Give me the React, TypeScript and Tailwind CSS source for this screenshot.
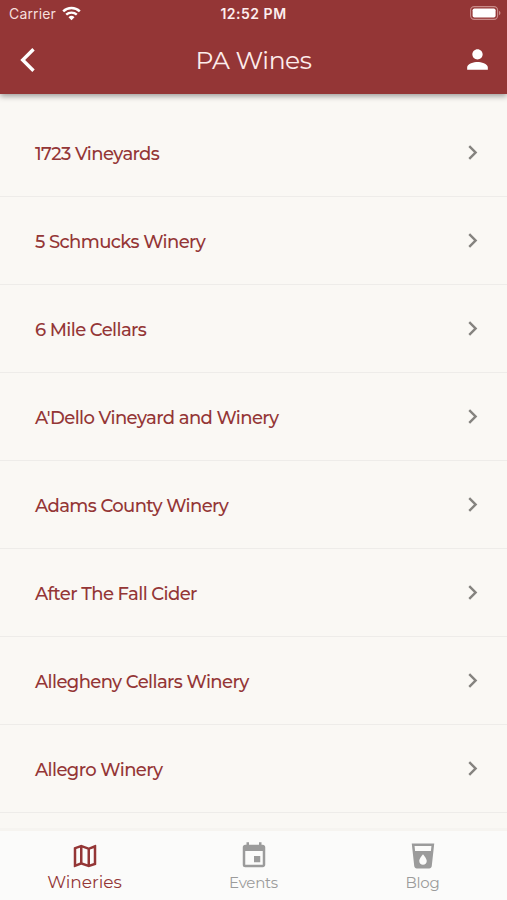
import React from "react";
import {
  MdChevronRight,
  MdEvent,
  MdLocalDrink,
  MdOutlineMap,
  MdPerson,
} from "react-icons/md";

const wineries = [
  "1723 Vineyards",
  "5 Schmucks Winery",
  "6 Mile Cellars",
  "A'Dello Vineyard and Winery",
  "Adams County Winery",
  "After The Fall Cider",
  "Allegheny Cellars Winery",
  "Allegro Winery",
];

const StatusBar = () => (
  <div className="grid h-7 grid-cols-3 items-center px-[8px] font-['Inter',sans-serif]">
    <div className="flex items-center gap-[6px] pl-px">
      <span className="text-[14px] leading-7 tracking-[0.15px] text-[#f6dfdc]">Carrier</span>
      <svg className="mb-[2px] text-white" width="19" height="15" viewBox="0 0 19 15" fill="none">
        <path d="M1.2 5.4a12 12 0 0 1 16.6 0" stroke="currentColor" strokeWidth="2.5" />
        <path d="M4.2 8.7a7.7 7.7 0 0 1 10.6 0" stroke="currentColor" strokeWidth="2.4" />
        <path d="M9.5 14.2 6.5 11.2a4.3 4.3 0 0 1 6 0z" fill="currentColor" />
      </svg>
    </div>
    <p className="pb-px text-center text-[14px] font-semibold tracking-[0.5px] text-[#fdeeee]">
      12:52 PM
    </p>
    <svg className="mb-[2px] mr-[-2px] justify-self-end" width="31" height="14" viewBox="0 0 31 14">
      <rect x="0.6" y="0.6" width="27" height="12.8" rx="3.6" fill="none" stroke="#c98b89" strokeWidth="1.1" />
      <rect x="2.6" y="2.4" width="23" height="9.2" rx="1.8" fill="#fff" />
      <path d="M29 4.8c2 .8 2 3.6 0 4.4z" fill="#c98b89" />
    </svg>
  </div>
);

const Header = () => (
  <header className="relative z-10 h-[94px] bg-[#943636] shadow-[0_2px_6px_rgba(0,0,0,0.4)]">
    <StatusBar />
    <div className="flex h-[63px] items-center justify-between pl-[20px] pr-[14px] text-white">
      <button type="button" aria-label="Back" className="w-[25px]">
        <svg width="16" height="26" viewBox="0 0 16 26" fill="none">
          <path d="M13.5 2.2 2.7 13l10.8 10.8" stroke="currentColor" strokeWidth="3.4" />
        </svg>
      </button>
      <h1 className="whitespace-nowrap pt-[2px] text-[25px] tracking-[-0.45px] text-[#fdeceb]">
        PA Wines
      </h1>
      <button type="button" aria-label="Account" className="w-[31px]">
        <MdPerson size={31} />
      </button>
    </div>
  </header>
);

const App = () => {
  return (
    <div className="flex h-[900px] w-[507px] flex-col overflow-hidden bg-[#faf8f4] font-['Montserrat','Inter',sans-serif]">
      <Header />
      <ul className="min-h-0 flex-1 overflow-hidden pt-[15px]">
        {wineries.map((name) => (
          <li
            key={name}
            className="flex h-[88px] items-center justify-between border-b border-[#eeece9] pl-[35px] pr-[20px]"
          >
            <span className="pt-[4px] text-[18px] font-medium tracking-[-0.6px] text-[#943636]">
              {name}
            </span>
            <MdChevronRight size={29} className="text-[#85837f]" />
          </li>
        ))}
      </ul>
      <nav className="grid h-[72px] grid-cols-3 border-t-[3px] border-[#f6f4f0] bg-[#fbfbfa] pt-[10px] text-[#9b9b9b]">
        <div className="flex flex-col items-center text-[#943636]">
          <MdOutlineMap size={30} />
          <span className="text-[17px] leading-[22px]">Wineries</span>
        </div>
        <div className="flex flex-col items-center">
          <MdEvent size={30} />
          <span className="text-[15px] leading-[24px] tracking-[-0.25px]">Events</span>
        </div>
        <div className="flex flex-col items-center">
          <MdLocalDrink size={30} />
          <span className="text-[15px] leading-[24px] tracking-[-0.25px]">Blog</span>
        </div>
      </nav>
    </div>
  );
};

export default App;
